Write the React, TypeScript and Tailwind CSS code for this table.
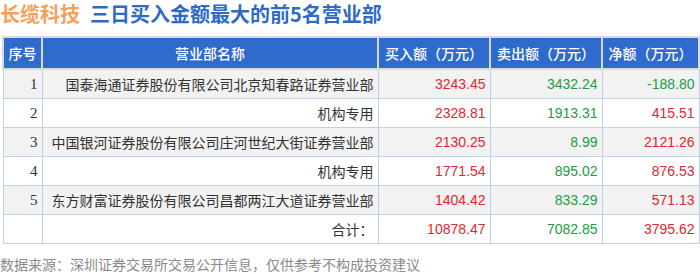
const rows = [
  { no: "1", name: "国泰海通证券股份有限公司北京知春路证券营业部", buy: "3243.45", sell: "3432.24", net: "-188.80" },
  { no: "2", name: "机构专用", buy: "2328.81", sell: "1913.31", net: "415.51" },
  { no: "3", name: "中国银河证券股份有限公司庄河世纪大街证券营业部", buy: "2130.25", sell: "8.99", net: "2121.26" },
  { no: "4", name: "机构专用", buy: "1771.54", sell: "895.02", net: "876.53" },
  { no: "5", name: "东方财富证券股份有限公司昌都两江大道证券营业部", buy: "1404.42", sell: "833.29", net: "571.13" },
];

const cjk = "font-['Noto_Sans_CJK_SC','Noto_Sans',sans-serif]";
const num = "font-['Liberation_Sans',Arial,sans-serif]";

export default function App() {
  return (
    <div className={`w-[700px] h-[274px] bg-white overflow-hidden ${cjk}`}>
      <div className="h-[27px] flex items-center gap-[10px] text-[20px] font-bold leading-none">
        <span className="text-[#f7a05c]">长缆科技</span>
        <span className="text-[#2e6bc6]">三日买入金额最大的前5名营业部</span>
      </div>

      <div className="mt-[9px] px-[2px]">
        <table className="w-[696px] table-fixed border-collapse text-[14px] leading-[18px]">
          <colgroup>
            <col className="w-[39px]" />
            <col className="w-[336px]" />
            <col className="w-[112px]" />
            <col className="w-[112px]" />
            <col className="w-[97px]" />
          </colgroup>
          <thead>
            <tr className="h-[32px] bg-[#2f6bcc] text-white">
              <th className="border-2 border-[#d9d9d9] font-medium text-center">序号</th>
              <th className="border-2 border-[#d9d9d9] font-medium text-center">营业部名称</th>
              <th className="border-2 border-[#d9d9d9] font-medium text-center">买入额（万元）</th>
              <th className="border-2 border-[#d9d9d9] font-medium text-center">卖出额（万元）</th>
              <th className="border-2 border-[#d9d9d9] font-medium text-center">净额（万元）</th>
            </tr>
          </thead>
          <tbody className="text-[#333]">
            {rows.map((r, i) => (
              <tr key={r.no} className={`h-[29px] ${i % 2 === 0 ? "bg-[#f2f2f2]" : "bg-white"}`}>
                <td className="border border-[#bcd2e8] text-right pr-[4px] font-['Liberation_Serif',serif] text-[15px]">{r.no}</td>
                <td className="border border-[#bcd2e8] text-right pr-[4px] whitespace-nowrap">{r.name}</td>
                <td className={`border border-[#bcd2e8] text-right pr-[4px] text-[#e3262f] ${num}`}>{r.buy}</td>
                <td className={`border border-[#bcd2e8] text-right pr-[4px] text-[#229c44] ${num}`}>{r.sell}</td>
                <td className={`border border-[#bcd2e8] text-right pr-[4px] ${r.net.startsWith("-") ? "text-[#229c44]" : "text-[#e3262f]"} ${num}`}>{r.net}</td>
              </tr>
            ))}
            <tr className="h-[29px] bg-white">
              <td className="border border-[#bcd2e8]"></td>
              <td className="border border-[#bcd2e8] text-right pr-[4px]">合计：</td>
              <td className={`border border-[#bcd2e8] text-right pr-[4px] text-[#e3262f] ${num}`}>10878.47</td>
              <td className={`border border-[#bcd2e8] text-right pr-[4px] text-[#229c44] ${num}`}>7082.85</td>
              <td className={`border border-[#bcd2e8] text-right pr-[4px] text-[#e3262f] ${num}`}>3795.62</td>
            </tr>
          </tbody>
        </table>
      </div>

      <div className="mt-[12px] text-[14px] leading-[16px] text-[#8a8a8a] whitespace-nowrap">
        数据来源：深圳证券交易所交易公开信息，仅供参考不构成投资建议
      </div>
    </div>
  );
}
